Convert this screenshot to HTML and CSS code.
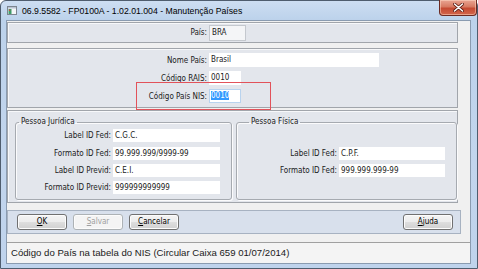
FILE: index.html
```html
<!DOCTYPE html>
<html>
    <head>
        <title>Manutenção Países</title>
        <meta charset="UTF-8">
        <link rel="stylesheet" href="styles.css">
    </head>
    <body>
        <div class="window">
            <!-- Заголовок окна -->
            <div class="titlebar">
                <svg class="app-icon" width="10" height="9" viewBox="0 0 10 9">
                    <rect x="0.5" y="0.5" width="9" height="8" fill="#f4f6f8" stroke="#7d8590"/>
                    <rect x="1" y="1" width="8" height="1.5" fill="#b8c4d2"/>
                    <rect x="1.5" y="3" width="3" height="5" fill="#3c9c6a"/>
                    <rect x="2" y="3.5" width="1.2" height="1.5" fill="#d04a3a"/>
                </svg>
                <span class="title">06.9.5582 - FP0100A - 1.02.01.004 - Manutenção Países</span>
                <div class="close">
                    <svg width="11" height="9" viewBox="0 0 11 9">
                        <path d="M1.5 1 L9.5 8 M9.5 1 L1.5 8" stroke="#5a1a10" stroke-width="3" stroke-linecap="round"/>
                        <path d="M1.5 1 L9.5 8 M9.5 1 L1.5 8" stroke="#ffffff" stroke-width="1.6" stroke-linecap="round"/>
                    </svg>
                </div>
            </div>

            <div class="client">
                <div class="form">
                    <!-- Ключ -->
                    <div class="panel panel-key">
                        <div class="row">
                            <span class="label">País:</span>
                            <div class="field field-key">BRA</div>
                        </div>
                    </div>

                    <!-- Основные поля -->
                    <div class="panel panel-main">
                        <div class="row">
                            <span class="label">Nome País:</span>
                            <div class="field field-name">Brasil</div>
                        </div>
                        <div class="row">
                            <span class="label">Código RAIS:</span>
                            <div class="field field-code">0010</div>
                        </div>
                        <div class="row">
                            <span class="label">Código País NIS:</span>
                            <div class="field field-code field-focus"><span class="selected">0010</span></div>
                        </div>
                        <div class="highlight"></div>
                    </div>

                    <!-- Группы -->
                    <div class="panel panel-groups">
                        <fieldset class="group group-pj">
                            <legend>Pessoa Jurídica</legend>
                            <div class="row row-group">
                                <span class="label">Label ID Fed:</span>
                                <div class="field">C.G.C.</div>
                            </div>
                            <div class="row row-group">
                                <span class="label">Formato ID Fed:</span>
                                <div class="field">99.999.999/9999-99</div>
                            </div>
                            <div class="row row-group">
                                <span class="label">Label ID Previd:</span>
                                <div class="field">C.E.I.</div>
                            </div>
                            <div class="row row-group">
                                <span class="label">Formato ID Previd:</span>
                                <div class="field">999999999999</div>
                            </div>
                        </fieldset>
                        <fieldset class="group group-pf">
                            <legend>Pessoa Física</legend>
                            <div class="row row-group">
                                <span class="label">Label ID Fed:</span>
                                <div class="field">C.P.F.</div>
                            </div>
                            <div class="row row-group">
                                <span class="label">Formato ID Fed:</span>
                                <div class="field">999.999.999-99</div>
                            </div>
                        </fieldset>
                    </div>

                    <!-- Кнопки -->
                    <div class="buttonbar">
                        <a class="button" href="#"><u>O</u>K</a>
                        <a class="button disabled" href="#"><u>S</u>alvar</a>
                        <a class="button" href="#"><u>C</u>ancelar</a>
                        <a class="button button-help" href="#"><u>A</u>juda</a>
                    </div>
                </div>

                <div class="statusbar">Código do País na tabela do NIS (Circular Caixa 659 01/07/2014)</div>
            </div>
        </div>
    </body>
</html>
```

FILE: styles.css
```css
/* Общие стили */
body {
    margin: 0;
    background: #ffffff;
    font-family: "DejaVu Sans Condensed", "Liberation Sans", sans-serif;
    font-size: 8px;
    color: #1a1a1a;
}

/* Окно */
.window {
    box-sizing: border-box;
    width: 478px;
    height: 269px;
    border: 1px solid #4f5d6e;
    border-radius: 6px 6px 0 0;
    background: linear-gradient(to bottom, #cddef2 0, #bcd2eb 19px, #c2d5ed 60%, #bfd3ec 100%);
    display: flex;
    flex-direction: column;
}

/* Заголовок */
.titlebar {
    height: 19px;
    display: flex;
    align-items: center;
}
.app-icon {
    margin-left: 6px;
    flex: none;
}
.title {
    margin-left: 5px;
    font-family: "Liberation Sans", sans-serif;
    font-size: 8.7px;
    color: #000000;
    white-space: nowrap;
}
.close {
    margin-left: auto;
    align-self: flex-start;
    margin-top: -1px;
    width: 38px;
    height: 16px;
    box-sizing: border-box;
    border: 1px solid #6b2a22;
    border-top: none;
    border-radius: 0 0 4px 4px;
    background: linear-gradient(to bottom, #e9a593 0, #d77a62 45%, #c54a32 55%, #d2664c 100%);
    box-shadow: inset 0 0 0 1px rgba(255, 220, 200, 0.5);
    display: flex;
    align-items: center;
    justify-content: center;
}

/* Клиентская область */
.client {
    flex: 1;
    margin: 0 6px 4px 5px;
    border: 1px solid #8a9bb0;
    background: #f0f0f0;
    display: flex;
    flex-direction: column;
}
.form {
    padding-right: 12px;
    display: flex;
    flex-direction: column;
}

/* Панели */
.panel {
    box-sizing: border-box;
    border: 1px solid #a1a5ab;
    background: #e3e6ec;
    box-shadow: inset 1px 1px 0 #f7f8fa;
}
.panel-key {
    margin-top: 1px;
    height: 21px;
    display: flex;
    align-items: center;
}
.panel-main {
    position: relative;
    margin-top: 5px;
    height: 60px;
    padding-top: 2px;
}
.panel-groups {
    margin-top: 2px;
    height: 93px;
    display: flex;
    align-items: flex-start;
}

/* Строки формы */
.row {
    display: flex;
    align-items: center;
    height: 18px;
    width: 100%;
}
.label {
    flex: none;
    width: 199px;
    margin-right: 2px;
    text-align: right;
    white-space: nowrap;
}
.field {
    box-sizing: border-box;
    height: 14px;
    padding: 0 2px;
    line-height: 14px;
    background: #ffffff;
    white-space: nowrap;
    overflow: hidden;
}
.field-key {
    width: 37px;
    height: 16px;
    line-height: 14px;
    border: 1px solid #c4c8ce;
    background: #f4f5f7;
}
.field-name {
    width: 170px;
}
.field-code {
    width: 32px;
}
.field-focus {
    border: 1px solid #b9d3ee;
    line-height: 12px;
    padding: 0 1px;
}
.selected {
    background: #3399ff;
    color: #ffffff;
}

/* Красная рамка */
.highlight {
    position: absolute;
    left: 128px;
    top: 33px;
    width: 135px;
    height: 28px;
    box-sizing: border-box;
    border: 1px solid #e2525a;
}

/* Групповые рамки */
.group {
    box-sizing: border-box;
    margin: 6px 0 0 0;
    padding: 0 0 2px 0;
    min-width: 0;
    border: 1px solid #a6aab0;
    border-radius: 3px;
    box-shadow: inset 1px 1px 0 #fbfbfc, 1px 1px 0 #fbfbfc;
}
.group legend {
    margin-left: 3px;
    padding: 0 2px;
    line-height: 10px;
}
.group-pj {
    margin-left: 7px;
    width: 217px;
}
.group-pf {
    margin-left: 4px;
    width: 221px;
    padding-top: 17.4px;
    padding-bottom: 19.4px;
}
.group-pf legend {
    margin-left: 12px;
}
.row-group {
    height: 17.4px;
}
.row-group .field {
    height: 13px;
    line-height: 13px;
}
.group-pj .label {
    width: 95px;
}
.group-pj .field {
    width: 107px;
}
.group-pf .label {
    width: 100px;
}
.group-pf .field {
    width: 106px;
}

/* Панель кнопок */
.buttonbar {
    box-sizing: border-box;
    margin-top: 7px;
    width: 454px;
    height: 24px;
    padding: 0 7px 0 9px;
    border: 1px solid #a7b2c1;
    background: #d8e0ec;
    display: flex;
    align-items: center;
    gap: 6px;
}
a.button {
    box-sizing: border-box;
    width: 50px;
    height: 16px;
    line-height: 14px;
    border: 1px solid #707070;
    border-radius: 3px;
    background: linear-gradient(to bottom, #f4f4f4 0%, #ececec 50%, #dedede 51%, #d0d0d0 100%);
    box-shadow: inset 0 0 0 1px #fcfcfc;
    text-align: center;
    text-decoration: none;
    color: #000000;
}
a.button u {
    text-decoration: underline;
}
a.button.disabled {
    border-color: #adb2b5;
    background: #f4f4f4;
    color: #a0a0a0;
}
a.button-help {
    margin-left: auto;
}

/* Строка состояния */
.statusbar {
    margin-top: auto;
    box-sizing: border-box;
    height: 21px;
    padding-left: 4px;
    border-top: 1px solid #a0a0a0;
    background: #f4f4f4;
    font-family: "Liberation Sans", sans-serif;
    font-size: 9.6px;
    line-height: 20px;
    white-space: nowrap;
}
```
